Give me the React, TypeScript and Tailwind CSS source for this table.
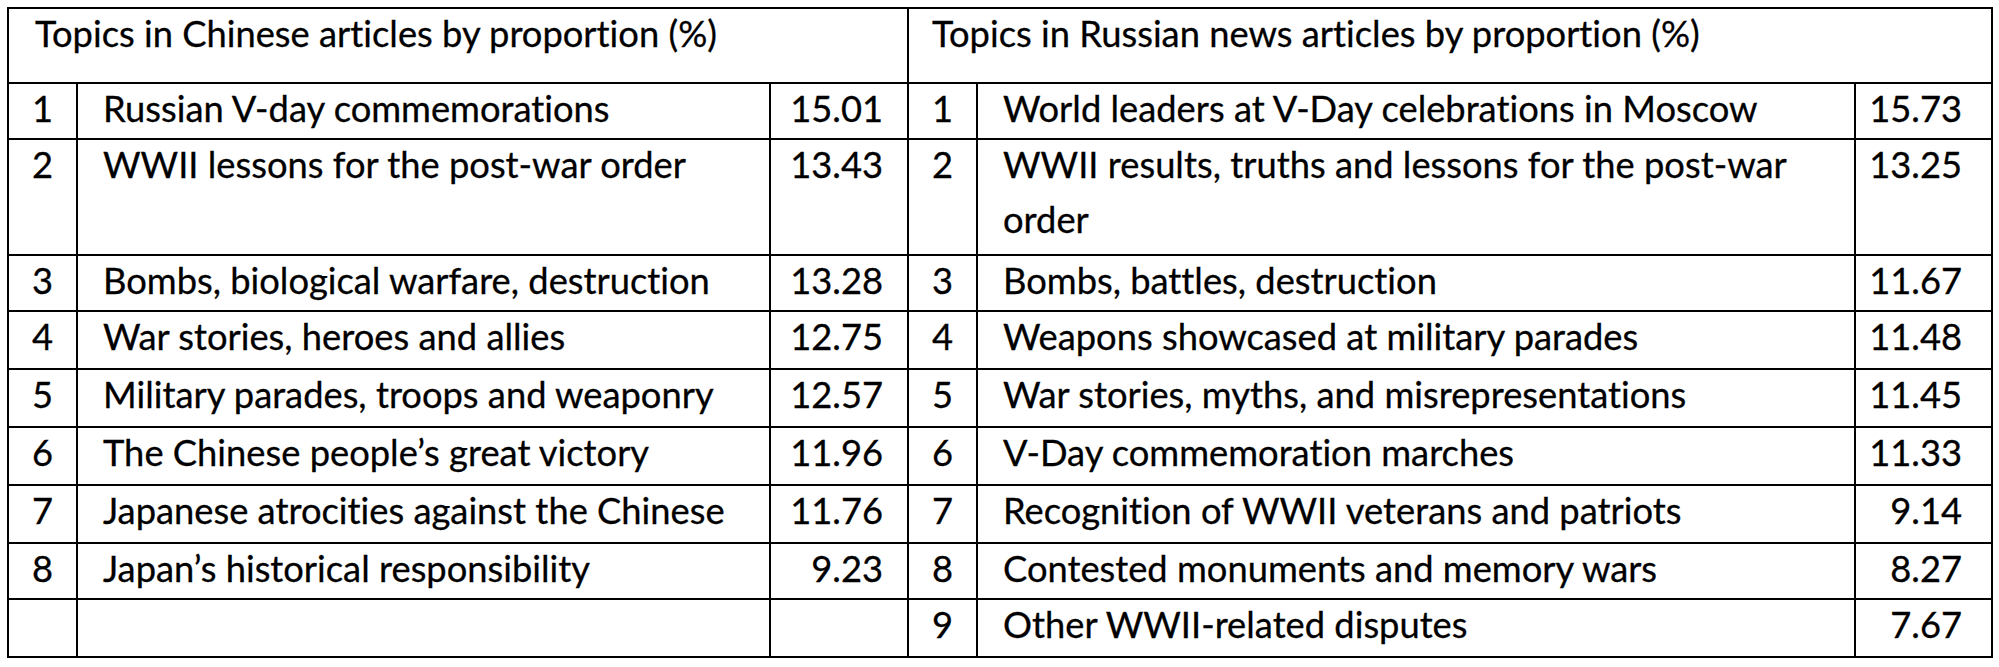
const chinese = [
  { n: "1", topic: "Russian V-day commemorations", pct: "15.01" },
  { n: "2", topic: "WWII lessons for the post-war order", pct: "13.43" },
  { n: "3", topic: "Bombs, biological warfare, destruction", pct: "13.28" },
  { n: "4", topic: "War stories, heroes and allies", pct: "12.75" },
  { n: "5", topic: "Military parades, troops and weaponry", pct: "12.57" },
  { n: "6", topic: "The Chinese people\u2019s great victory", pct: "11.96" },
  { n: "7", topic: "Japanese atrocities against the Chinese", pct: "11.76" },
  { n: "8", topic: "Japan\u2019s historical responsibility", pct: "9.23" },
  { n: "", topic: "", pct: "" },
];

const russian = [
  { n: "1", topic: ["World leaders at V-Day celebrations in Moscow"], pct: "15.73" },
  { n: "2", topic: ["WWII results, truths and lessons for the post-war", "order"], pct: "13.25" },
  { n: "3", topic: ["Bombs, battles, destruction"], pct: "11.67" },
  { n: "4", topic: ["Weapons showcased at military parades"], pct: "11.48" },
  { n: "5", topic: ["War stories, myths, and misrepresentations"], pct: "11.45" },
  { n: "6", topic: ["V-Day commemoration marches"], pct: "11.33" },
  { n: "7", topic: ["Recognition of WWII veterans and patriots"], pct: "9.14" },
  { n: "8", topic: ["Contested monuments and memory wars"], pct: "8.27" },
  { n: "9", topic: ["Other WWII-related disputes"], pct: "7.67" },
];

const cell = "bg-white whitespace-nowrap";

export default function App() {
  return (
    <div className="min-h-screen bg-white pl-[7px] pt-[7px] text-[36.3px] leading-[55px] text-black [font-family:Lato,'Open_Sans',sans-serif] [font-variant-ligatures:none] [-webkit-text-stroke:0.3px_#000]">
      <div className="grid w-fit grid-cols-[67px_691px_136px_67px_876px_135px] grid-rows-[73px_54px_114px_54px_56px_56px_56px_56px_54px_56px] gap-[2px] bg-black p-[2px]">
        <div className={`${cell} col-span-3 pl-[26px]`}>
          <div className="-mt-[3px]">Topics in Chinese articles by proportion (%)</div>
        </div>
        <div className={`${cell} col-span-3 pl-[23px]`}>
          <div className="-mt-[3px]">Topics in Russian news articles by proportion (%)</div>
        </div>

        {chinese.map((c, i) => {
          const r = russian[i];
          return [
            <div key={`cn${i}`} className={`${cell} text-center`}>
              <div className="-mt-[3px]">{c.n}</div>
            </div>,
            <div key={`ct${i}`} className={`${cell} pl-[25px]`}>
              <div className="-mt-[3px]">{c.topic}</div>
            </div>,
            <div key={`cp${i}`} className={`${cell} pr-[24px] text-right`}>
              <div className="-mt-[3px]">{c.pct}</div>
            </div>,
            <div key={`rn${i}`} className={`${cell} text-center`}>
              <div className="-mt-[3px]">{r.n}</div>
            </div>,
            <div key={`rt${i}`} className={`${cell} pl-[25px]`}>
              <div className="-mt-[3px]">
                {r.topic.map((line) => (
                  <div key={line}>{line}</div>
                ))}
              </div>
            </div>,
            <div key={`rp${i}`} className={`${cell} pr-[29px] text-right`}>
              <div className="-mt-[3px]">{r.pct}</div>
            </div>,
          ];
        })}
      </div>
    </div>
  );
}
